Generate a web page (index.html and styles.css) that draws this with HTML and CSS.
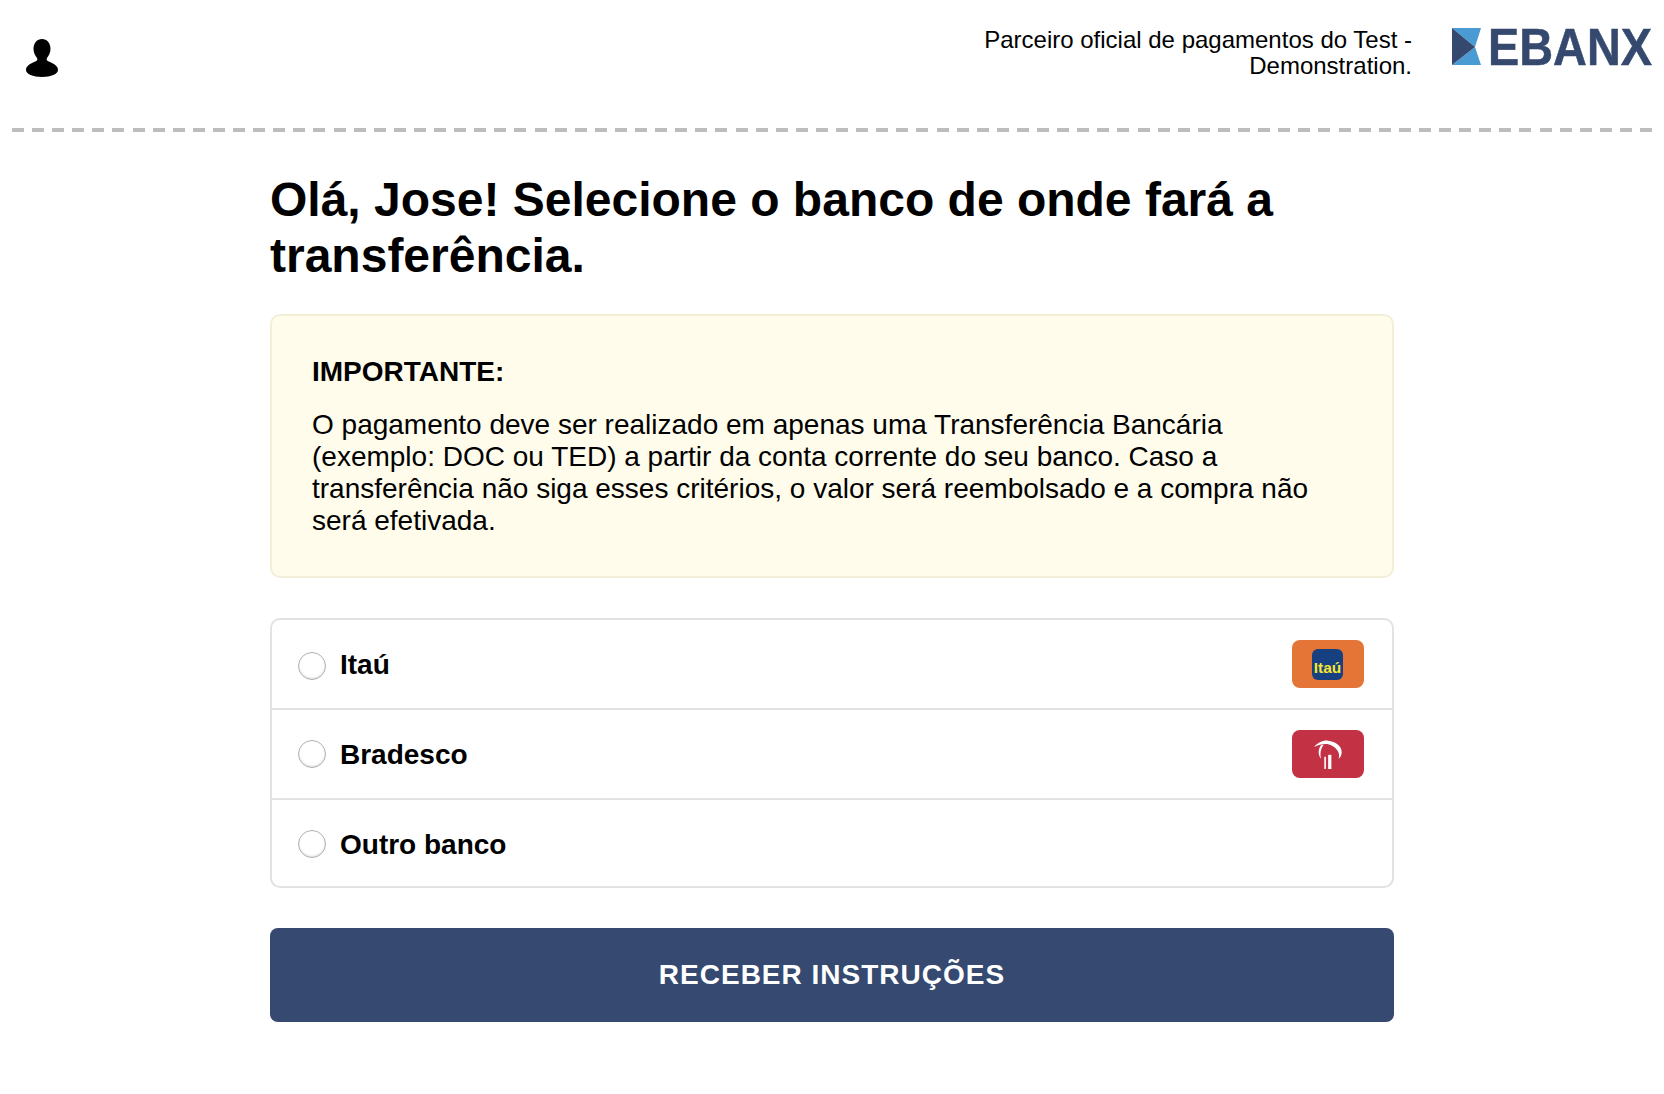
FILE: index.html
```html
<!DOCTYPE html>
<html lang="pt-BR">

<head>
	<meta charset="utf-8">
	<title>EBANX</title>
	<link rel="stylesheet" href="styles.css">
</head>

<body>
	<header class="topo">
		<svg class="usuario" viewBox="0 0 32 38" aria-hidden="true">
			<path d="M16 0c5 0 8.500 4 8.500 10 0 4-2 7-3.500 9-1 2 0 3 3 4 4 2 8 4 8 8 0 4-7 7-16 7S0 35 0 31c0-4 4-6 8-8 3-1 4-2 3-4-1.500-2-3.500-5-3.500-9C7.500 4 11 0 16 0z" />
		</svg>
		<div class="parceiro">
			<p>Parceiro oficial de pagamentos do Test - Demonstration.</p>
			<svg class="logo" viewBox="0 0 200 38" role="img" aria-label="EBANX">
				<polygon points="0,0 29,0 23,19" fill="#4a9ad4" />
				<polygon points="0,37 29,37 23,19" fill="#4a9ad4" />
				<polygon points="0,0 23,19 0,37" fill="#35496f" />
				<text x="36" y="37" textLength="164" lengthAdjust="spacingAndGlyphs" class="logo_txt">EBANX</text>
			</svg>
		</div>
	</header>

	<main class="conteudo">
		<h1>Olá, Jose! Selecione o banco de onde fará a transferência.</h1>

		<section class="aviso">
			<h3>IMPORTANTE:</h3>
			<p>O pagamento deve ser realizado em apenas uma Transferência Bancária (exemplo: DOC ou TED) a partir da conta corrente do seu banco. Caso a transferência não siga esses critérios, o valor será reembolsado e a compra não será efetivada.</p>
		</section>

		<ul class="bancos">
			<li class="banco">
				<span class="radio"></span>
				<span class="nome">Itaú</span>
				<span class="selo selo_itau"><span class="itau">Itaú</span></span>
			</li>
			<li class="banco">
				<span class="radio"></span>
				<span class="nome">Bradesco</span>
				<span class="selo selo_bradesco">
					<svg viewBox="0 0 87 90" aria-hidden="true">
						<path d="M0 22C12 8 28 0 44 2c24 2 44 18 42 38-1 8-4 14-10 18 6-14-2-30-20-40C42 8 20 12 0 22z" />
						<path d="M22 16C12 28 12 46 22 58 18 44 20 28 30 14z" />
						<rect x="32" y="52" width="5" height="38" />
						<rect x="44" y="46" width="10" height="44" />
					</svg>
				</span>
			</li>
			<li class="banco">
				<span class="radio"></span>
				<span class="nome">Outro banco</span>
			</li>
		</ul>

		<button class="enviar">RECEBER INSTRUÇÕES</button>
	</main>
</body>

</html>
```

FILE: styles.css
```css
* {
	margin: 0;
	box-sizing: border-box;
}

body {
	background: #fff;
	color: #000;
	font-family: "Liberation Sans", Arial, sans-serif;
}

.topo {
	display: flex;
	justify-content: space-between;
	margin: 0 12px;
	padding: 27px 0 0 14px;
	height: 132px;
	background: repeating-linear-gradient(90deg, #bdbdbd 0, #bdbdbd 12px, transparent 12px, transparent 20.1px) bottom / 100% 4px no-repeat;
}

.usuario {
	width: 32px;
	height: 38px;
	margin-top: 12px;
	fill: #000;
}

.parceiro {
	display: flex;
	align-items: flex-start;
	gap: 40px;
}

.parceiro p {
	width: 440px;
	text-align: right;
	font-size: 24px;
	line-height: 26px;
}

.logo {
	width: 200px;
	height: 38px;
	margin-top: 1px;
	overflow: visible;
}

.logo_txt {
	font-family: "Liberation Sans", Arial, sans-serif;
	font-size: 51px;
	font-weight: bold;
	fill: #35496f;
	stroke: #35496f;
	stroke-width: 0.5;
}

.conteudo {
	width: 1124px;
	margin: 40px 0 0 270px;
}

h1 {
	font-size: 48px;
	line-height: 56px;
	font-weight: bold;
}

.aviso {
	margin-top: 30px;
	padding: 40px 60px 40px 40px;
	height: 264px;
	background: #fffcec;
	border: 2px solid #f3eed8;
	border-radius: 10px;
}

.aviso h3 {
	font-size: 28px;
	line-height: 32px;
	font-weight: bold;
}

.aviso p {
	margin-top: 21px;
	font-size: 28px;
	line-height: 32px;
}

.bancos {
	list-style: none;
	padding: 0;
	margin-top: 40px;
	border: 2px solid #e2e2e2;
	border-radius: 10px;
}

.banco {
	display: flex;
	align-items: center;
	height: 90px;
	padding: 0 28px 0 26px;
	border-bottom: 2px solid #e2e2e2;
}

.banco:first-child .radio {
	margin-top: 4px;
}

.banco:last-child {
	border-bottom: 0;
	height: 86px;
}

.banco:last-child .radio {
	margin-top: 2px;
}

.banco:last-child .nome {
	padding-top: 4px;
}

.radio {
	width: 28px;
	height: 28px;
	border: 1px solid #b0b0b0;
	border-radius: 50%;
	background: #fff;
	box-shadow: inset 0 -1px 2px #ddd;
}

.nome {
	margin-left: 14px;
	padding-top: 2px;
	font-size: 28px;
	font-weight: bold;
}

.selo {
	display: flex;
	align-items: center;
	justify-content: center;
	width: 72px;
	height: 48px;
	margin-left: auto;
	border-radius: 8px;
}

.selo_itau {
	background: #e57537;
}

.selo_bradesco {
	background: #c23144;
}

.selo_bradesco svg {
	width: 28px;
	height: 29px;
	fill: #fff;
}

.itau {
	display: flex;
	align-items: flex-end;
	justify-content: center;
	width: 31px;
	height: 31px;
	margin-right: 1px;
	padding-bottom: 3px;
	background: #16407f;
	border-radius: 6px;
	color: #f7e62f;
	font-size: 15.5px;
	font-weight: bold;
}

.enviar {
	display: block;
	width: 100%;
	height: 94px;
	margin-top: 40px;
	background: #354971;
	border: none;
	border-radius: 8px;
	color: #fff;
	font-family: "Liberation Sans", Arial, sans-serif;
	font-size: 28px;
	font-weight: bold;
	letter-spacing: 1px;
}
```
